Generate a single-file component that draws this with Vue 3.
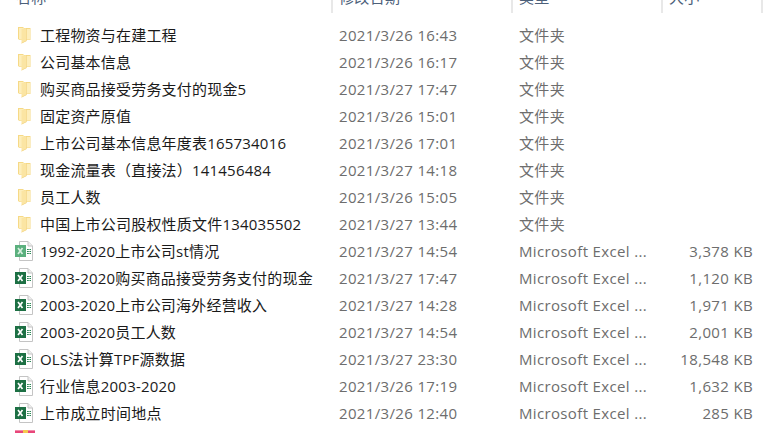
<script setup>
const rows = [
  { name: '工程物资与在建工程', date: '2021/3/26 16:43', type: '文件夹', size: '', kind: 'folder' },
  { name: '公司基本信息', date: '2021/3/26 16:17', type: '文件夹', size: '', kind: 'folder' },
  { name: '购买商品接受劳务支付的现金5', date: '2021/3/27 17:47', type: '文件夹', size: '', kind: 'folder' },
  { name: '固定资产原值', date: '2021/3/26 15:01', type: '文件夹', size: '', kind: 'folder' },
  { name: '上市公司基本信息年度表165734016', date: '2021/3/26 17:01', type: '文件夹', size: '', kind: 'folder' },
  { name: '现金流量表（直接法）141456484', date: '2021/3/27 14:18', type: '文件夹', size: '', kind: 'folder' },
  { name: '员工人数', date: '2021/3/26 15:05', type: '文件夹', size: '', kind: 'folder' },
  { name: '中国上市公司股权性质文件134035502', date: '2021/3/27 13:44', type: '文件夹', size: '', kind: 'folder' },
  { name: '1992-2020上市公司st情况', date: '2021/3/27 14:54', type: 'Microsoft Excel ...', size: '3,378 KB', kind: 'excel-pale' },
  { name: '2003-2020购买商品接受劳务支付的现金', date: '2021/3/27 17:47', type: 'Microsoft Excel ...', size: '1,120 KB', kind: 'excel' },
  { name: '2003-2020上市公司海外经营收入', date: '2021/3/27 14:28', type: 'Microsoft Excel ...', size: '1,971 KB', kind: 'excel' },
  { name: '2003-2020员工人数', date: '2021/3/27 14:54', type: 'Microsoft Excel ...', size: '2,001 KB', kind: 'excel' },
  { name: 'OLS法计算TPF源数据', date: '2021/3/27 23:30', type: 'Microsoft Excel ...', size: '18,548 KB', kind: 'excel' },
  { name: '行业信息2003-2020', date: '2021/3/26 17:19', type: 'Microsoft Excel ...', size: '1,632 KB', kind: 'excel' },
  { name: '上市成立时间地点', date: '2021/3/26 12:40', type: 'Microsoft Excel ...', size: '285 KB', kind: 'excel' },
];
</script>

<template>
  <div class="explorer">
    <div class="header">
      <div class="head-cell name-col">名称</div>
      <div class="head-cell date-col">修改日期</div>
      <div class="head-cell type-col">类型</div>
      <div class="head-cell size-col">大小</div>
    </div>
    <div class="list">
      <div v-for="row in rows" :key="row.name" class="row">
        <div class="name-cell">
          <svg v-if="row.kind === 'folder'" class="icon" width="13" height="18" viewBox="0 0 13 18">
            <path d="M0 1h5l1 1h6.500v12H1.500L0 13z" fill="#f6d986" />
            <path d="M1 2h4.500l1 1h5.500v10.500H2L1 13z" fill="#fdeebc" />
            <path d="M3.500 3l5-1v13l-5 2.500z" fill="#fbe5a3" />
            <path d="M8.500 2v13l-5 2.500V17l4.500-2.300V2z" fill="#efcd78" />
          </svg>
          <svg v-else class="icon xl" :class="{ pale: row.kind === 'excel-pale' }" width="20" height="20" viewBox="0 0 20 20">
            <path d="M4.500 .5H13L17.500 5v14.500h-13z" fill="#fff" stroke="#c4c4c4" />
            <path d="M13 .5V5h4.500" fill="#eee" stroke="#c4c4c4" />
            <path class="xl-grid" d="M12 8.500h1.800M14.400 8.500H16M12 10.500h1.800M14.400 10.500H16M12 12.500h1.800M14.400 12.500H16" />
            <rect class="xl-badge" x="0" y="4" width="11" height="12" />
            <path class="xl-mark" d="M3 7l4.500 6M7.500 7L3 13" stroke-width="1.700" fill="none" />
          </svg>
          <span class="name-text">{{ row.name }}</span>
        </div>
        <div class="date-cell">{{ row.date }}</div>
        <div class="type-cell">{{ row.type }}</div>
        <div class="size-cell">{{ row.size }}</div>
      </div>
      <svg class="cut-icon" width="20" height="4" viewBox="0 0 20 4">
        <rect x="0" y="0" width="20" height="4" fill="#e8467a" />
        <rect x="0" y="0" width="20" height="1" fill="#f18bab" />
        <rect x="8" y="0" width="5" height="4" fill="#f6c94f" />
      </svg>
    </div>
  </div>
</template>

<style scoped>
.explorer {
  width: 783px;
  height: 433px;
  overflow: hidden;
  background: #fff;
  font-family: "Open Sans", "Noto Sans CJK SC", sans-serif;
  font-size: 15px;
  letter-spacing: 0.35px;
}

.header {
  display: grid;
  grid-template-columns: 333px 180px 150px 100px;
  height: 13px;
  overflow: hidden;
}

.head-cell {
  height: 16px;
  margin-top: -3px;
  padding-left: 6px;
  border-right: 2px solid #e8e8e8;
  color: #4c607a;
  line-height: 0;
}

.head-cell.name-col {
  padding-left: 16px;
}

.list {
  padding-top: 8px;
}

.row {
  display: grid;
  grid-template-columns: 331px 180px 143px 99px;
  height: 27px;
  align-items: center;
  color: #6d6d6d;
  white-space: nowrap;
}

.name-cell {
  display: flex;
  align-items: center;
  padding-left: 18px;
  color: #1a1a1a;
  letter-spacing: 0.2px;
}

.icon {
  width: 13px;
  flex: none;
  margin-right: 9px;
}

.icon.xl {
  width: 20px;
  margin-left: -3px;
  margin-right: 5px;
}

.xl-badge {
  fill: #1d7044;
}

.xl-mark {
  stroke: #fff;
}

.xl-grid {
  stroke: #2f8a58;
}

.pale .xl-badge {
  fill: #5bb07e;
}

.pale .xl-mark {
  stroke: #d8f0e0;
}

.date-cell,
.type-cell {
  padding-left: 8px;
}

.size-cell {
  text-align: right;
}

.cut-icon {
  display: block;
  margin: 4px 0 0 15px;
}
</style>
